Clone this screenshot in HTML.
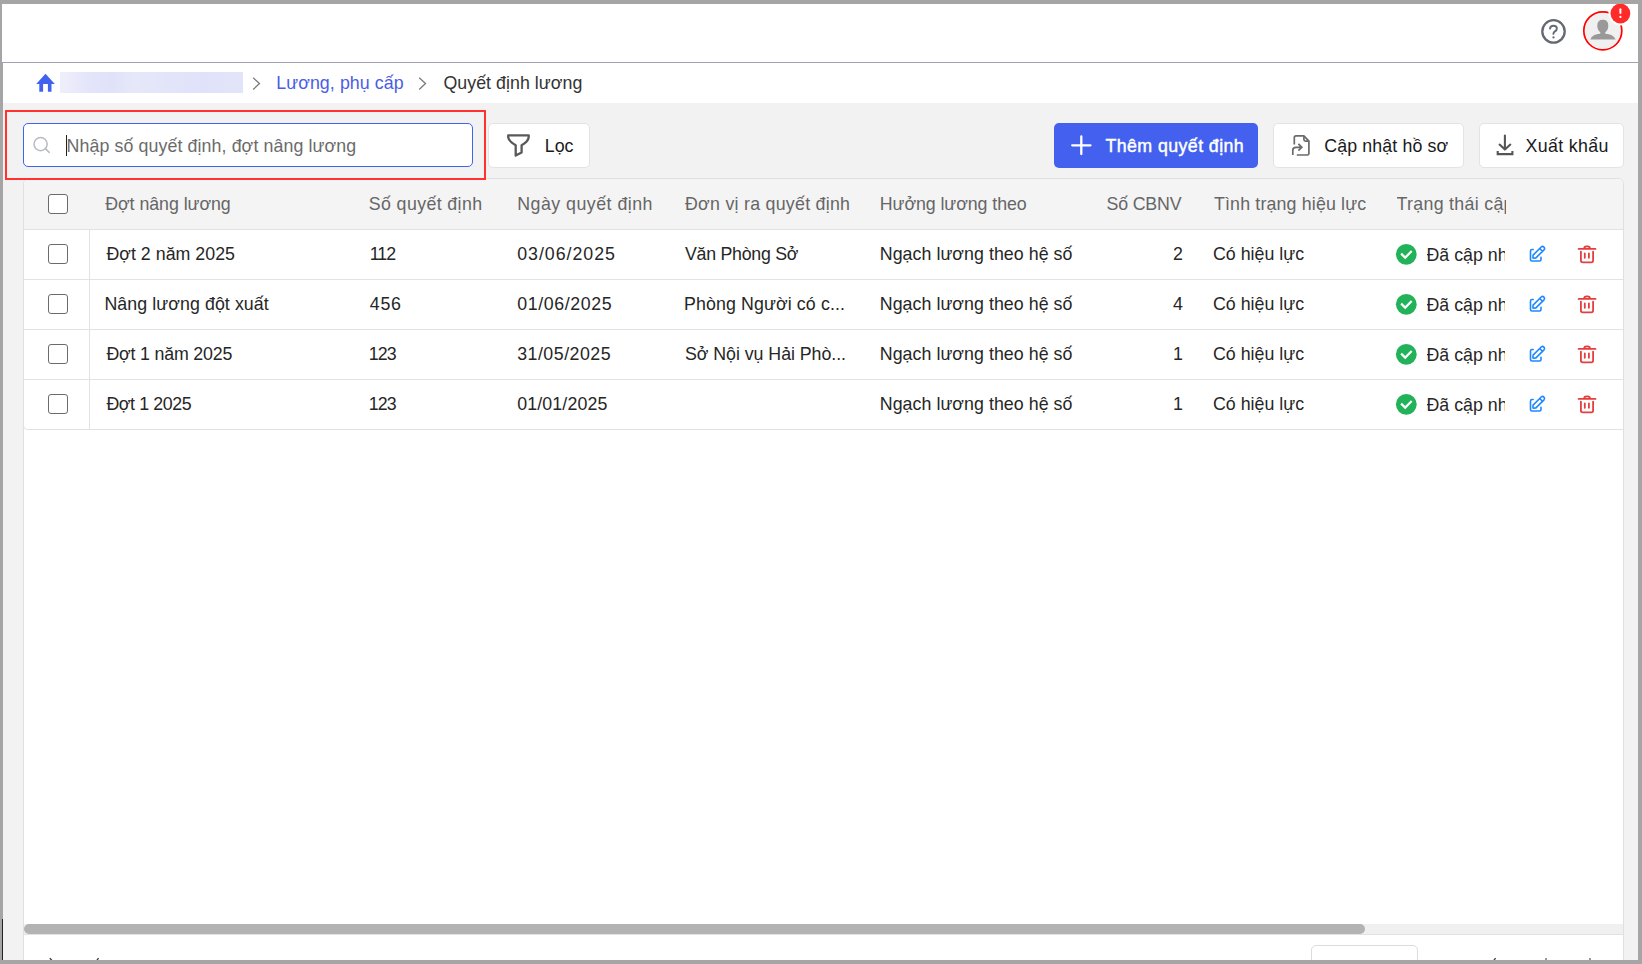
<!DOCTYPE html>
<html><head><meta charset="utf-8"><title>Quyết định lương</title>
<style>
html,body{margin:0;padding:0;}
body{width:1642px;height:964px;overflow:hidden;position:relative;font-family:"Liberation Sans",sans-serif;}
.t{position:absolute;white-space:nowrap;line-height:20px;font-size:17.8px;}
svg{overflow:visible}
</style></head><body>
<div style="position:absolute;left:0;top:0;width:1642px;height:964px;background:#a5a5a5"></div>
<div style="position:absolute;left:2px;top:4px;width:1636px;height:58px;background:#fff"></div>
<div style="position:absolute;left:2px;top:62px;width:1636px;height:1px;background:#a1a2b1"></div>
<div style="position:absolute;left:3px;top:63px;width:1635px;height:40px;background:#fff"></div>
<div style="position:absolute;left:3px;top:103px;width:1635px;height:857px;background:#f2f2f2"></div>
<div style="position:absolute;left:2px;top:919px;width:1px;height:41px;background:#222"></div>
<svg style="position:absolute;left:1535px;top:13px" width="38" height="38" viewBox="0 0 38 38">
<circle cx="18.5" cy="18.4" r="11.2" fill="none" stroke="#646a73" stroke-width="2.3"/>
<path d="M15 15.6 Q15.3 12.7 18.5 12.7 Q21.9 12.7 21.9 15.6 Q21.9 17.3 19.9 18.4 Q18.4 19.3 18.4 20.9" fill="none" stroke="#646a73" stroke-width="1.9" stroke-linecap="round"/>
<circle cx="18.5" cy="24.4" r="1.15" fill="#646a73"/>
</svg>
<svg style="position:absolute;left:1578px;top:0px" width="60" height="56" viewBox="0 0 60 56">
<circle cx="24.8" cy="30.8" r="17.9" fill="#f0f0f0"/>
<circle cx="24.8" cy="30.8" r="19" fill="none" stroke="#ff0000" stroke-width="1.7"/>
<path d="M19.3 25.6 Q19.3 19.8 24.8 19.8 Q30.3 19.8 30.3 25.6 Q30.3 30.4 27.3 32.3 V34.4 H22.3 V32.3 Q19.3 30.4 19.3 25.6 Z" fill="#999"/>
<path d="M12.3 39.6 Q14 33.6 24.8 33.6 Q35.6 33.6 37.6 39.6 Z" fill="#999"/>
<circle cx="42.4" cy="13.5" r="12" fill="#fff"/>
<circle cx="42.4" cy="13.5" r="9.9" fill="#ff2a2a"/>
<rect x="41.4" y="8.2" width="2" height="5.8" rx="1" fill="#fff"/>
<circle cx="42.4" cy="16.9" r="1.1" fill="#fff"/>
</svg>
<svg style="position:absolute;left:34px;top:72px" width="24" height="22" viewBox="0 0 24 22">
<path d="M11.5 1.8 L20.8 11.9 H17.5 V19.8 H13.9 V11.9 H9.1 V19.8 H5.3 V11.9 H2.2 Z" fill="#4062ee"/>
</svg>
<div style="position:absolute;left:60px;top:72px;width:183px;height:21px;background:linear-gradient(90deg,#efeffb 0%,#e4e5fa 15%,#e0e2fa 28%,#e6e8f9 42%,#e2e4f9 60%,#e0e2fa 78%,#e2e4f9 100%)"></div>
<svg style="position:absolute;left:250px;top:75px" width="14" height="17" viewBox="0 0 14 17"><path d="M3.2 2.8 L9.5 8.6 L3.2 14.4" fill="none" stroke="#7a7a7a" stroke-width="1.3"/></svg>
<svg style="position:absolute;left:416px;top:75px" width="14" height="17" viewBox="0 0 14 17"><path d="M3.2 2.8 L9.5 8.6 L3.2 14.4" fill="none" stroke="#7a7a7a" stroke-width="1.3"/></svg>
<div id="t1" class="t" style="left:276.20px;top:73px;color:#4a5de6;font-size:17.8px;font-weight:normal;letter-spacing:0.085px;">Lương, phụ cấp</div>
<div id="t2" class="t" style="left:443.40px;top:73px;color:#333;font-size:17.8px;font-weight:normal;letter-spacing:0.047px;">Quyết định lương</div>
<div style="position:absolute;left:23px;top:123px;width:448px;height:42px;border:1px solid #4263eb;border-radius:5px;background:#fff"></div>
<svg style="position:absolute;left:30px;top:134px" width="22" height="22" viewBox="0 0 22 22">
<circle cx="10.6" cy="10.1" r="6.6" fill="none" stroke="#b8bcc2" stroke-width="1.5"/>
<path d="M15.4 14.6 L19.2 18.4" stroke="#b8bcc2" stroke-width="1.6" stroke-linecap="round"/>
</svg>
<div style="position:absolute;left:66px;top:135px;width:1px;height:21px;background:#222"></div>
<div id="t3" class="t" style="left:66.60px;top:136px;color:#6b6b6b;font-size:17.8px;font-weight:normal;letter-spacing:0.097px;">Nhập số quyết định, đợt nâng lương</div>
<div style="position:absolute;left:488px;top:123px;width:100px;height:43px;border:1px solid #e3e3e3;border-radius:5px;background:#fff"></div>
<svg style="position:absolute;left:505px;top:132px" width="27" height="27" viewBox="0 0 27 27">
<path d="M3.2 3.3 H23.7 V5.2 Q23.3 9.6 16.6 13.3 V20.5 L10.7 23.6 V13.3 Q4 9.6 3.2 5.2 Z" fill="none" stroke="#595959" stroke-width="2.3" stroke-linejoin="round"/>
</svg>
<div id="t4" class="t" style="left:544.80px;top:136px;color:#1a1a1a;font-size:17.8px;font-weight:normal;letter-spacing:0.000px;">Lọc</div>
<div style="position:absolute;left:1054px;top:123px;width:204px;height:45px;border-radius:5px;background:#4361ee"></div>
<svg style="position:absolute;left:1069px;top:133px" width="24" height="24" viewBox="0 0 24 24">
<path d="M12.3 3.4 V21.1 M3.2 12.3 H21.5" stroke="#fff" stroke-width="2.3" stroke-linecap="round"/>
</svg>
<div id="t5" class="t" style="left:1105.40px;top:136px;color:#fff;font-size:17.8px;font-weight:normal;letter-spacing:0.421px;-webkit-text-stroke:0.45px #fff;">Thêm quyết định</div>
<div style="position:absolute;left:1273px;top:123px;width:189px;height:43px;border:1px solid #e3e3e3;border-radius:5px;background:#fff"></div>
<svg style="position:absolute;left:1290px;top:133px" width="22" height="24" viewBox="0 0 22 24">
<path d="M4.3 11.4 V4.6 Q4.3 2.9 6 2.9 H13.9 L18.9 8.2 V20.4 Q18.9 22 17.3 22 H6.8" fill="none" stroke="#6b6b6b" stroke-width="1.7" stroke-linejoin="round"/>
<path d="M13.9 3.2 V6.5 Q13.9 8.1 15.5 8.1 H18.7" fill="none" stroke="#6b6b6b" stroke-width="1.7"/>
<path d="M2.8 22 V17.2 Q2.8 14.3 6 14.3 H11.8 M8.4 10.9 L11.8 14.3 L8.4 17.7" fill="none" stroke="#6b6b6b" stroke-width="1.7"/>
</svg>
<div id="t6" class="t" style="left:1324.20px;top:136px;color:#1a1a1a;font-size:17.8px;font-weight:normal;letter-spacing:0.123px;">Cập nhật hồ sơ</div>
<div style="position:absolute;left:1479px;top:123px;width:143px;height:43px;border:1px solid #e3e3e3;border-radius:5px;background:#fff"></div>
<svg style="position:absolute;left:1493px;top:133px" width="24" height="24" viewBox="0 0 24 24">
<path d="M11.9 2.6 V15.6 M6.6 11.6 L11.9 16.6 L17.3 11.6" fill="none" stroke="#555" stroke-width="2.1" stroke-linecap="round" stroke-linejoin="round"/>
<path d="M4.7 18.1 V21.1 H19.4 V18.1" fill="none" stroke="#555" stroke-width="2.1"/>
</svg>
<div id="t7" class="t" style="left:1525.60px;top:136px;color:#1a1a1a;font-size:17.8px;font-weight:normal;letter-spacing:0.325px;">Xuất khẩu</div>
<div style="position:absolute;left:23px;top:178px;width:1599px;height:790px;border:1px solid #e0e0e0;border-radius:6px 6px 0 0;background:#fff"></div>
<div style="position:absolute;left:24px;top:179px;width:1599px;height:50px;background:#f4f4f4;border-radius:6px 6px 0 0"></div>
<div style="position:absolute;left:24px;top:229px;width:1599px;height:1px;background:#e2e2e2"></div>
<div style="position:absolute;left:48px;top:194px;width:18px;height:18px;border:1.2px solid #6b6b6b;border-radius:3px;background:#fff;box-sizing:content-box"></div>
<div id="t8" class="t" style="left:105.20px;top:194px;color:#666;font-size:17.8px;font-weight:normal;letter-spacing:-0.046px;">Đợt nâng lương</div>
<div id="t9" class="t" style="left:368.80px;top:194px;color:#666;font-size:17.8px;font-weight:normal;letter-spacing:0.375px;">Số quyết định</div>
<div id="t10" class="t" style="left:517.20px;top:194px;color:#666;font-size:17.8px;font-weight:normal;letter-spacing:0.486px;">Ngày quyết định</div>
<div id="t11" class="t" style="left:685.00px;top:194px;color:#666;font-size:17.8px;font-weight:normal;letter-spacing:0.268px;">Đơn vị ra quyết định</div>
<div id="t12" class="t" style="left:879.80px;top:194px;color:#666;font-size:17.8px;font-weight:normal;letter-spacing:-0.073px;">Hưởng lương theo</div>
<div id="t13" class="t" style="left:1106.60px;top:194px;color:#666;font-size:17.8px;font-weight:normal;letter-spacing:-0.200px;">Số CBNV</div>
<div id="t14" class="t" style="left:1214.00px;top:194px;color:#666;font-size:17.8px;font-weight:normal;letter-spacing:0.161px;">Tình trạng hiệu lực</div>
<div class="t" style="left:1396.6px;top:194px;color:#666;width:109.5px;overflow:hidden;letter-spacing:0.3px">Trạng thái cập nhật</div>
<div style="position:absolute;left:48px;top:244px;width:18px;height:18px;border:1.2px solid #6b6b6b;border-radius:3px;background:#fff;box-sizing:content-box"></div>
<div id="t15" class="t" style="left:106.40px;top:244px;color:#262626;font-size:17.8px;font-weight:normal;letter-spacing:0.023px;">Đợt 2 năm 2025</div>
<div id="t16" class="t" style="left:369.70px;top:244px;color:#262626;font-size:17.8px;font-weight:normal;letter-spacing:-1.000px;">112</div>
<div id="t17" class="t" style="left:517.20px;top:244px;color:#262626;font-size:17.8px;font-weight:normal;letter-spacing:0.967px;">03/06/2025</div>
<div id="t18" class="t" style="left:685.00px;top:244px;color:#262626;font-size:17.8px;font-weight:normal;letter-spacing:-0.273px;">Văn Phòng Sở</div>
<div id="t19" class="t" style="left:879.80px;top:244px;color:#262626;font-size:17.8px;font-weight:normal;letter-spacing:0.048px;">Ngạch lương theo hệ số</div>
<div class="t" style="left:1100px;width:83px;text-align:right;top:244px;color:#262626">2</div>
<div id="t20" class="t" style="left:1213.00px;top:244px;color:#262626;font-size:17.8px;font-weight:normal;letter-spacing:0.010px;">Có hiệu lực</div>
<svg style="position:absolute;left:1395px;top:243px" width="23" height="23" viewBox="0 0 23 23">
<circle cx="11.3" cy="11.3" r="10.4" fill="#22b25a"/>
<path d="M6.1 10.6 L10.2 14.6 L16.7 8.0" fill="none" stroke="#fff" stroke-width="2.2" stroke-linejoin="miter"/>
</svg>
<div class="t" style="left:1426.5px;top:245px;color:#262626;width:78.5px;overflow:hidden">Đã cập nhật</div>
<svg style="position:absolute;left:1526px;top:243px" width="22" height="22" viewBox="0 0 22 22">
<path d="M7.2 6.5 H6 Q4.5 6.5 4.5 8 V16.6 Q4.5 18 6 18 H13.6 Q15 18 15 16.6 V14.4" fill="none" stroke="#1f88ff" stroke-width="1.6" stroke-linecap="round"/>
<path d="M7.09 12.09 L15.19 3.99 A2 2 0 0 1 18.01 6.81 L9.91 14.91 L7.6 15.2 Q6.9 15.2 6.9 14.5 Z M13.7 5.5 L16.5 8.3" fill="none" stroke="#1f88ff" stroke-width="1.6" stroke-linejoin="round"/>
</svg>
<svg style="position:absolute;left:1576px;top:243px" width="22" height="22" viewBox="0 0 22 22">
<path d="M2.6 5.9 H19.5" stroke="#e53e3e" stroke-width="1.8" stroke-linecap="round"/>
<path d="M8.1 5.8 Q8.1 3.3 10.5 3.3 H11.6 Q14 3.3 14 5.8" fill="none" stroke="#e53e3e" stroke-width="1.8"/>
<path d="M4.9 8.6 V17.5 Q4.9 19.4 6.9 19.4 H15.2 Q17.1 19.4 17.1 17.5 V8.6" fill="none" stroke="#e53e3e" stroke-width="1.8" stroke-linecap="round"/>
<path d="M8.8 10.5 V14.8 M12.9 10.5 V14.8" stroke="#e53e3e" stroke-width="1.8" stroke-linecap="round"/>
</svg>
<div style="position:absolute;left:24px;top:279px;width:1599px;height:1px;background:#e2e2e2"></div>
<div style="position:absolute;left:48px;top:294px;width:18px;height:18px;border:1.2px solid #6b6b6b;border-radius:3px;background:#fff;box-sizing:content-box"></div>
<div id="t21" class="t" style="left:104.40px;top:294px;color:#262626;font-size:17.8px;font-weight:normal;letter-spacing:0.078px;">Nâng lương đột xuất</div>
<div id="t22" class="t" style="left:369.80px;top:294px;color:#262626;font-size:17.8px;font-weight:normal;letter-spacing:0.750px;">456</div>
<div id="t23" class="t" style="left:517.20px;top:294px;color:#262626;font-size:17.8px;font-weight:normal;letter-spacing:0.611px;">01/06/2025</div>
<div id="t24" class="t" style="left:684.00px;top:294px;color:#262626;font-size:17.8px;font-weight:normal;letter-spacing:0.111px;">Phòng Người có c...</div>
<div id="t25" class="t" style="left:879.80px;top:294px;color:#262626;font-size:17.8px;font-weight:normal;letter-spacing:0.048px;">Ngạch lương theo hệ số</div>
<div class="t" style="left:1100px;width:83px;text-align:right;top:294px;color:#262626">4</div>
<div id="t26" class="t" style="left:1213.00px;top:294px;color:#262626;font-size:17.8px;font-weight:normal;letter-spacing:0.010px;">Có hiệu lực</div>
<svg style="position:absolute;left:1395px;top:293px" width="23" height="23" viewBox="0 0 23 23">
<circle cx="11.3" cy="11.3" r="10.4" fill="#22b25a"/>
<path d="M6.1 10.6 L10.2 14.6 L16.7 8.0" fill="none" stroke="#fff" stroke-width="2.2" stroke-linejoin="miter"/>
</svg>
<div class="t" style="left:1426.5px;top:295px;color:#262626;width:78.5px;overflow:hidden">Đã cập nhật</div>
<svg style="position:absolute;left:1526px;top:293px" width="22" height="22" viewBox="0 0 22 22">
<path d="M7.2 6.5 H6 Q4.5 6.5 4.5 8 V16.6 Q4.5 18 6 18 H13.6 Q15 18 15 16.6 V14.4" fill="none" stroke="#1f88ff" stroke-width="1.6" stroke-linecap="round"/>
<path d="M7.09 12.09 L15.19 3.99 A2 2 0 0 1 18.01 6.81 L9.91 14.91 L7.6 15.2 Q6.9 15.2 6.9 14.5 Z M13.7 5.5 L16.5 8.3" fill="none" stroke="#1f88ff" stroke-width="1.6" stroke-linejoin="round"/>
</svg>
<svg style="position:absolute;left:1576px;top:293px" width="22" height="22" viewBox="0 0 22 22">
<path d="M2.6 5.9 H19.5" stroke="#e53e3e" stroke-width="1.8" stroke-linecap="round"/>
<path d="M8.1 5.8 Q8.1 3.3 10.5 3.3 H11.6 Q14 3.3 14 5.8" fill="none" stroke="#e53e3e" stroke-width="1.8"/>
<path d="M4.9 8.6 V17.5 Q4.9 19.4 6.9 19.4 H15.2 Q17.1 19.4 17.1 17.5 V8.6" fill="none" stroke="#e53e3e" stroke-width="1.8" stroke-linecap="round"/>
<path d="M8.8 10.5 V14.8 M12.9 10.5 V14.8" stroke="#e53e3e" stroke-width="1.8" stroke-linecap="round"/>
</svg>
<div style="position:absolute;left:24px;top:329px;width:1599px;height:1px;background:#e2e2e2"></div>
<div style="position:absolute;left:48px;top:344px;width:18px;height:18px;border:1.2px solid #6b6b6b;border-radius:3px;background:#fff;box-sizing:content-box"></div>
<div id="t27" class="t" style="left:106.40px;top:344px;color:#262626;font-size:17.8px;font-weight:normal;letter-spacing:-0.185px;">Đợt 1 năm 2025</div>
<div id="t28" class="t" style="left:368.80px;top:344px;color:#262626;font-size:17.8px;font-weight:normal;letter-spacing:-0.950px;">123</div>
<div id="t29" class="t" style="left:517.20px;top:344px;color:#262626;font-size:17.8px;font-weight:normal;letter-spacing:0.489px;">31/05/2025</div>
<div id="t30" class="t" style="left:685.00px;top:344px;color:#262626;font-size:17.8px;font-weight:normal;letter-spacing:-0.047px;">Sở Nội vụ Hải Phò...</div>
<div id="t31" class="t" style="left:879.80px;top:344px;color:#262626;font-size:17.8px;font-weight:normal;letter-spacing:0.048px;">Ngạch lương theo hệ số</div>
<div class="t" style="left:1100px;width:83px;text-align:right;top:344px;color:#262626">1</div>
<div id="t32" class="t" style="left:1213.00px;top:344px;color:#262626;font-size:17.8px;font-weight:normal;letter-spacing:0.010px;">Có hiệu lực</div>
<svg style="position:absolute;left:1395px;top:343px" width="23" height="23" viewBox="0 0 23 23">
<circle cx="11.3" cy="11.3" r="10.4" fill="#22b25a"/>
<path d="M6.1 10.6 L10.2 14.6 L16.7 8.0" fill="none" stroke="#fff" stroke-width="2.2" stroke-linejoin="miter"/>
</svg>
<div class="t" style="left:1426.5px;top:345px;color:#262626;width:78.5px;overflow:hidden">Đã cập nhật</div>
<svg style="position:absolute;left:1526px;top:343px" width="22" height="22" viewBox="0 0 22 22">
<path d="M7.2 6.5 H6 Q4.5 6.5 4.5 8 V16.6 Q4.5 18 6 18 H13.6 Q15 18 15 16.6 V14.4" fill="none" stroke="#1f88ff" stroke-width="1.6" stroke-linecap="round"/>
<path d="M7.09 12.09 L15.19 3.99 A2 2 0 0 1 18.01 6.81 L9.91 14.91 L7.6 15.2 Q6.9 15.2 6.9 14.5 Z M13.7 5.5 L16.5 8.3" fill="none" stroke="#1f88ff" stroke-width="1.6" stroke-linejoin="round"/>
</svg>
<svg style="position:absolute;left:1576px;top:343px" width="22" height="22" viewBox="0 0 22 22">
<path d="M2.6 5.9 H19.5" stroke="#e53e3e" stroke-width="1.8" stroke-linecap="round"/>
<path d="M8.1 5.8 Q8.1 3.3 10.5 3.3 H11.6 Q14 3.3 14 5.8" fill="none" stroke="#e53e3e" stroke-width="1.8"/>
<path d="M4.9 8.6 V17.5 Q4.9 19.4 6.9 19.4 H15.2 Q17.1 19.4 17.1 17.5 V8.6" fill="none" stroke="#e53e3e" stroke-width="1.8" stroke-linecap="round"/>
<path d="M8.8 10.5 V14.8 M12.9 10.5 V14.8" stroke="#e53e3e" stroke-width="1.8" stroke-linecap="round"/>
</svg>
<div style="position:absolute;left:24px;top:379px;width:1599px;height:1px;background:#e2e2e2"></div>
<div style="position:absolute;left:48px;top:394px;width:18px;height:18px;border:1.2px solid #6b6b6b;border-radius:3px;background:#fff;box-sizing:content-box"></div>
<div id="t33" class="t" style="left:106.40px;top:394px;color:#262626;font-size:17.8px;font-weight:normal;letter-spacing:-0.389px;">Đợt 1 2025</div>
<div id="t34" class="t" style="left:368.80px;top:394px;color:#262626;font-size:17.8px;font-weight:normal;letter-spacing:-0.950px;">123</div>
<div id="t35" class="t" style="left:517.20px;top:394px;color:#262626;font-size:17.8px;font-weight:normal;letter-spacing:0.133px;">01/01/2025</div>
<div id="t36" class="t" style="left:879.80px;top:394px;color:#262626;font-size:17.8px;font-weight:normal;letter-spacing:0.048px;">Ngạch lương theo hệ số</div>
<div class="t" style="left:1100px;width:83px;text-align:right;top:394px;color:#262626">1</div>
<div id="t37" class="t" style="left:1213.00px;top:394px;color:#262626;font-size:17.8px;font-weight:normal;letter-spacing:0.010px;">Có hiệu lực</div>
<svg style="position:absolute;left:1395px;top:393px" width="23" height="23" viewBox="0 0 23 23">
<circle cx="11.3" cy="11.3" r="10.4" fill="#22b25a"/>
<path d="M6.1 10.6 L10.2 14.6 L16.7 8.0" fill="none" stroke="#fff" stroke-width="2.2" stroke-linejoin="miter"/>
</svg>
<div class="t" style="left:1426.5px;top:395px;color:#262626;width:78.5px;overflow:hidden">Đã cập nhật</div>
<svg style="position:absolute;left:1526px;top:393px" width="22" height="22" viewBox="0 0 22 22">
<path d="M7.2 6.5 H6 Q4.5 6.5 4.5 8 V16.6 Q4.5 18 6 18 H13.6 Q15 18 15 16.6 V14.4" fill="none" stroke="#1f88ff" stroke-width="1.6" stroke-linecap="round"/>
<path d="M7.09 12.09 L15.19 3.99 A2 2 0 0 1 18.01 6.81 L9.91 14.91 L7.6 15.2 Q6.9 15.2 6.9 14.5 Z M13.7 5.5 L16.5 8.3" fill="none" stroke="#1f88ff" stroke-width="1.6" stroke-linejoin="round"/>
</svg>
<svg style="position:absolute;left:1576px;top:393px" width="22" height="22" viewBox="0 0 22 22">
<path d="M2.6 5.9 H19.5" stroke="#e53e3e" stroke-width="1.8" stroke-linecap="round"/>
<path d="M8.1 5.8 Q8.1 3.3 10.5 3.3 H11.6 Q14 3.3 14 5.8" fill="none" stroke="#e53e3e" stroke-width="1.8"/>
<path d="M4.9 8.6 V17.5 Q4.9 19.4 6.9 19.4 H15.2 Q17.1 19.4 17.1 17.5 V8.6" fill="none" stroke="#e53e3e" stroke-width="1.8" stroke-linecap="round"/>
<path d="M8.8 10.5 V14.8 M12.9 10.5 V14.8" stroke="#e53e3e" stroke-width="1.8" stroke-linecap="round"/>
</svg>
<div style="position:absolute;left:89px;top:230px;width:1px;height:199px;background:#e2e2e2"></div>
<div style="position:absolute;left:23px;top:424px;width:1600px;height:5px;border-bottom:1px solid #e2e2e2;border-left:1px solid #e2e2e2;border-radius:0 0 0 5px"></div>
<div style="position:absolute;left:24px;top:924px;width:1599px;height:10px;background:#f0f0f0"></div>
<div style="position:absolute;left:24px;top:924px;width:1341px;height:10px;background:#b3b3b3;border-radius:5px"></div>
<div style="position:absolute;left:24px;top:934px;width:1599px;height:1px;background:#e2e2e2"></div>
<div style="position:absolute;left:1311px;top:945px;width:105px;height:30px;border:1px solid #dcdcdc;border-radius:5px;background:#fff"></div>
<svg style="position:absolute;left:49px;top:957px" width="5" height="5" viewBox="0 0 5 5"><path d="M0.8 1.2 L3.2 3.6" stroke="#333" stroke-width="1.3"/></svg>
<svg style="position:absolute;left:95px;top:957px" width="5" height="5" viewBox="0 0 5 5"><path d="M3.6 1.2 L1.4 3.8" stroke="#333" stroke-width="1.3"/></svg>
<svg style="position:absolute;left:1492px;top:957px" width="5" height="5" viewBox="0 0 5 5"><path d="M3.6 1.2 L1.4 3.8" stroke="#333" stroke-width="1.3"/></svg>
<div style="position:absolute;left:1545px;top:958px;width:2px;height:2px;background:#999"></div>
<div style="position:absolute;left:1589px;top:958px;width:2px;height:2px;background:#999"></div>
<div style="position:absolute;left:5px;top:110px;width:477px;height:66px;border:2px solid #ff3131"></div>
<div style="position:absolute;left:0;top:960px;width:1642px;height:4px;background:#a5a5a5"></div>
<div style="position:absolute;left:0;top:0;width:1642px;height:4px;background:#a5a5a5"></div>
<div style="position:absolute;left:1638px;top:0;width:4px;height:964px;background:#a5a5a5"></div>
</body></html>
